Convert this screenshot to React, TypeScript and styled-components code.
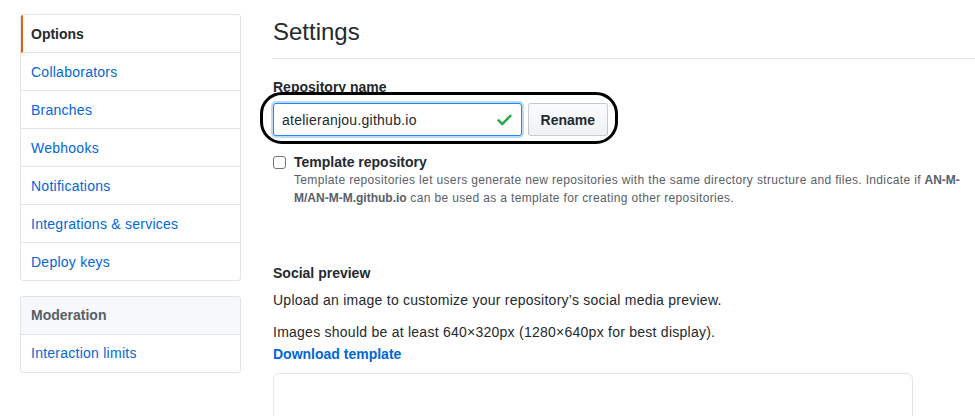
import React from "react";
import styled, { createGlobalStyle } from "styled-components";

const Global = createGlobalStyle`
  html, body { margin: 0; padding: 0; background: #fff; overflow: hidden; }
  body {
    font-family: "Liberation Sans", Arial, sans-serif;
    font-size: 14px;
    line-height: 1.5;
    color: #24292e;
  }
  * { box-sizing: border-box; }
`;

const Page = styled.div`
  display: grid;
  grid-template-columns: 221px 720px;
  column-gap: 32px;
  padding: 14px 0 0 20px;
  width: 1000px;
`;

const Sidebar = styled.nav`
  display: flex;
  flex-direction: column;
  gap: 15px;
`;

const Menu = styled.div`
  border: 1px solid #e1e4e8;
  border-radius: 3px;
  overflow: hidden;
  display: flex;
  flex-direction: column;
`;

const MenuHeading = styled.div`
  padding: 8px 10px;
  line-height: 21px;
  font-weight: 700;
  color: #586069;
  background: #f6f8fa;
  border-bottom: 1px solid #e1e4e8;
`;

const MenuItem = styled.a<{ $selected?: boolean; $shift?: number }>`
  display: block;
  padding: ${(p) => 8 + (p.$shift ?? 1)}px 10px ${(p) => 8 - (p.$shift ?? 1)}px
    ${(p) => (p.$selected ? 8 : 10)}px;
  line-height: 21px;
  color: ${(p) => (p.$selected ? "#24292e" : "#0366d6")};
  font-weight: ${(p) => (p.$selected ? 700 : 400)};
  letter-spacing: ${(p) => (p.$selected ? 0 : 0.25)}px;
  border-left: ${(p) => (p.$selected ? "2px solid #e36209" : "none")};
  text-decoration: none;
  &:not(:last-child) { border-bottom: 1px solid #e1e4e8; }
`;

const Main = styled.main`
  display: flex;
  flex-direction: column;
`;

const Subhead = styled.div`
  padding-bottom: 8px;
  border-bottom: 1px solid #e1e4e8;
  margin-bottom: 18px;
`;

const Title = styled.h2`
  margin: 0;
  font-size: 24px;
  font-weight: 400;
  line-height: 36px;
`;

const Label = styled.label`
  display: block;
  font-weight: 700;
  line-height: 21px;
  margin-bottom: 5px;
`;

const RenameRow = styled.div`
  position: relative;
  display: flex;
  align-items: stretch;
  gap: 6px;
  width: 335px;
`;

const Annotation = styled.div`
  position: absolute;
  left: -13px;
  top: -11px;
  right: -10px;
  bottom: -8px;
  border: 3px solid #000;
  border-radius: 22px;
  pointer-events: none;
`;

const InputWrap = styled.div`
  position: relative;
  width: 250px;
  height: 33px;
`;

const TextInput = styled.input`
  width: 100%;
  height: 100%;
  padding: 0 32px 0 8px;
  font-family: inherit;
  font-size: 14px;
  letter-spacing: 0.25px;
  color: #24292e;
  border: 1px solid #2188ff;
  border-radius: 3px;
  outline: none;
  box-shadow: 0 0 0 2px rgba(3, 102, 214, 0.25);
`;

const Check = styled.svg`
  position: absolute;
  right: 10px;
  top: 10px;
  width: 15px;
  height: 13px;
`;

const Button = styled.button`
  height: 33px;
  padding: 0 12px;
  font-family: inherit;
  font-size: 14px;
  font-weight: 700;
  color: #24292e;
  background: linear-gradient(-180deg, #fafbfc 0%, #eff3f6 90%);
  border: 1px solid rgba(27, 31, 35, 0.2);
  border-radius: 3px;
`;

const CheckRow = styled.div`
  display: flex;
  align-items: flex-start;
  gap: 8px;
  margin-top: 17px;
`;

const Box = styled.span`
  flex: none;
  width: 13px;
  height: 13px;
  margin-top: 3px;
  border: 1px solid #767676;
  border-radius: 3px;
  background: #fff;
`;

const CheckText = styled.div`
  display: flex;
  flex-direction: column;
`;

const CheckLabel = styled.div`
  font-weight: 700;
  line-height: 18px;
`;

const Note = styled.p`
  margin: 0;
  max-width: 680px;
  font-size: 12px;
  line-height: 18px;
  letter-spacing: 0.35px;
  color: #586069;
  b { font-weight: 700; letter-spacing: 0; }
`;

const SectionTitle = styled.h4`
  margin: 56px 0 6px;
  font-size: 14px;
  font-weight: 700;
  line-height: 21px;
`;

const Para = styled.p<{ $gap?: number; $lh?: number }>`
  margin: 0 0 ${(p) => p.$gap ?? 10}px;
  line-height: ${(p) => p.$lh ?? 21}px;
  letter-spacing: 0.25px;
`;

const Link = styled.a`
  color: #0366d6;
  font-weight: 700;
  letter-spacing: 0;
  text-decoration: none;
`;

const Preview = styled.div`
  width: 640px;
  height: 320px;
  border: 1px solid #e1e4e8;
  border-radius: 6px;
`;

export default function App() {
  const items = [
    "Collaborators",
    "Branches",
    "Webhooks",
    "Notifications",
    "Integrations & services",
    "Deploy keys",
  ];
  return (
    <>
      <Global />
      <Page>
        <Sidebar>
          <Menu>
            <MenuItem $selected>Options</MenuItem>
            {items.map((t) => (
              <MenuItem key={t}>{t}</MenuItem>
            ))}
          </Menu>
          <Menu>
            <MenuHeading>Moderation</MenuHeading>
            <MenuItem $shift={0}>Interaction limits</MenuItem>
          </Menu>
        </Sidebar>
        <Main>
          <Subhead>
            <Title>Settings</Title>
          </Subhead>
          <Label>Repository name</Label>
          <RenameRow>
            <InputWrap>
              <TextInput defaultValue="atelieranjou.github.io" />
              <Check viewBox="0 0 12 10">
                <path d="M12 2.2 4.2 10 0 5.8l1.4-1.4 2.8 2.8L10.6 0.8z" fill="#28a745" />
              </Check>
            </InputWrap>
            <Button>Rename</Button>
            <Annotation />
          </RenameRow>
          <CheckRow>
            <Box />
            <CheckText>
              <CheckLabel>Template repository</CheckLabel>
              <Note>
                Template repositories let users generate new repositories with the same directory
                structure and files. Indicate if <b>AN-M-M/AN-M-M.github.io</b> can be used as a
                template for creating other repositories.
              </Note>
            </CheckText>
          </CheckRow>
          <SectionTitle>Social preview</SectionTitle>
          <Para>Upload an image to customize your repository’s social media preview.</Para>
          <Para $lh={22} $gap={8}>
            Images should be at least 640×320px (1280×640px for best display).
            <br />
            <Link>Download template</Link>
          </Para>
          <Preview />
        </Main>
      </Page>
    </>
  );
}
